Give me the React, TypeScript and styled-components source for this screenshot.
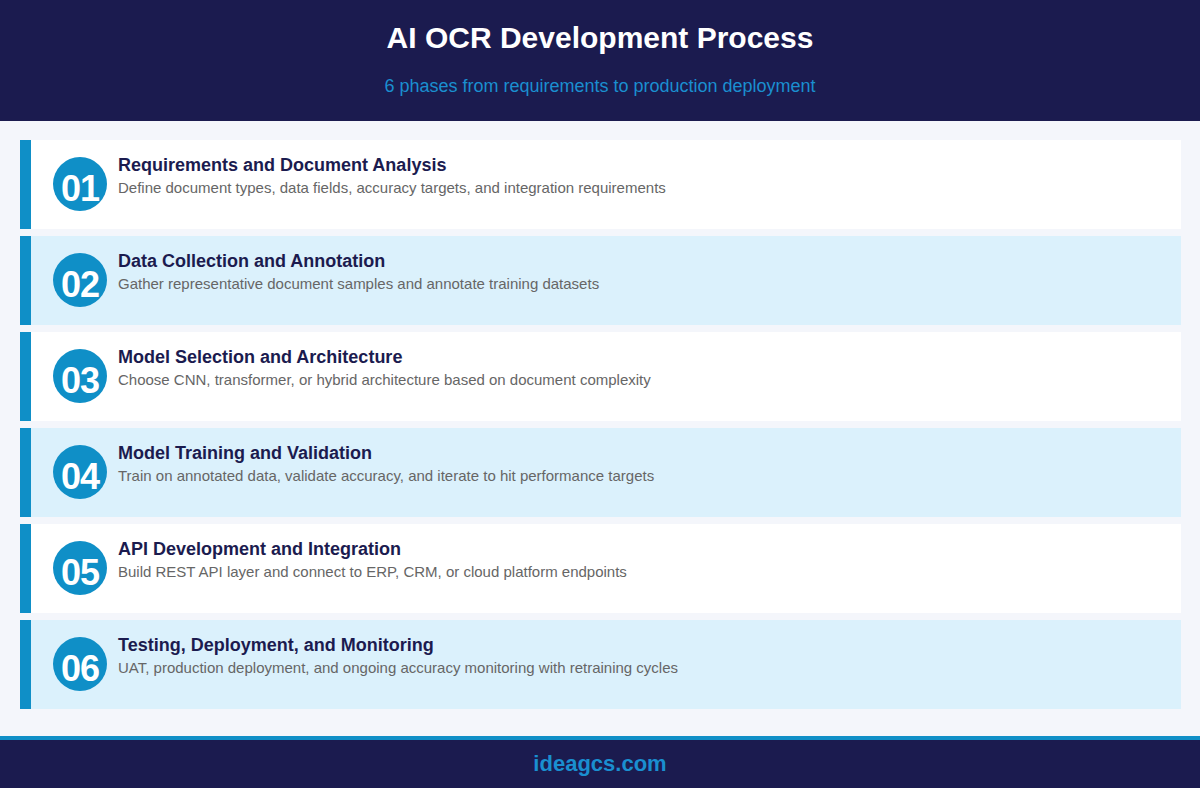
import styled, { createGlobalStyle } from 'styled-components';

const GlobalStyle = createGlobalStyle`
  body { margin: 0; font-family: "Liberation Sans", Arial, sans-serif; background: #f4f6fb; }
`;

const phases = [
  ['Requirements and Document Analysis', 'Define document types, data fields, accuracy targets, and integration requirements'],
  ['Data Collection and Annotation', 'Gather representative document samples and annotate training datasets'],
  ['Model Selection and Architecture', 'Choose CNN, transformer, or hybrid architecture based on document complexity'],
  ['Model Training and Validation', 'Train on annotated data, validate accuracy, and iterate to hit performance targets'],
  ['API Development and Integration', 'Build REST API layer and connect to ERP, CRM, or cloud platform endpoints'],
  ['Testing, Deployment, and Monitoring', 'UAT, production deployment, and ongoing accuracy monitoring with retraining cycles'],
];

const Page = styled.div`
  width: 1200px;
  height: 788px;
  display: flex;
  flex-direction: column;
`;

const Header = styled.header`
  height: 121px;
  background: #1b1b4f;
  display: flex;
  flex-direction: column;
  align-items: center;
  box-sizing: border-box;
  padding-top: 20px;
`;

const Title = styled.h1`
  margin: 0;
  color: #fff;
  font-size: 30px;
  font-weight: 700;
  line-height: 36px;
`;

const Subtitle = styled.p`
  margin: 19px 0 0;
  color: #1a8fd0;
  font-size: 18px;
  line-height: 22px;
`;

const List = styled.main`
  flex: 1;
  padding: 19px 19px 0 20px;
  display: flex;
  flex-direction: column;
  gap: 7px;
`;

const Row = styled.div<{ $alt: boolean }>`
  height: 89px;
  display: flex;
  align-items: flex-start;
  background: ${p => (p.$alt ? '#dbf1fc' : '#ffffff')};
  border-left: 11px solid #0f8fc7;
  box-sizing: border-box;
`;

const Badge = styled.div`
  width: 54px;
  height: 54px;
  margin: 17px 0 0 22px;
  border-radius: 50%;
  background: #0f8fc7;
  color: #fff;
  font-size: 36px;
  font-weight: 700;
  letter-spacing: -1px;
  display: flex;
  justify-content: center;
  align-items: center;
  padding-top: 10px;
  box-sizing: border-box;
  flex-shrink: 0;
`;

const Text = styled.div`
  margin: 13px 0 0 11px;
`;

const PhaseTitle = styled.div`
  color: #1b1b4f;
  font-size: 18px;
  font-weight: 700;
  line-height: 24px;
`;

const PhaseDesc = styled.div`
  color: #666;
  font-size: 15px;
  line-height: 22px;
`;

const Footer = styled.footer`
  height: 48px;
  border-top: 4px solid #0f8fc7;
  background: #1b1b4f;
  color: #1a8fd0;
  font-size: 22px;
  font-weight: 700;
  display: flex;
  justify-content: center;
  align-items: center;
`;

export default function App() {
  return (
    <Page>
      <GlobalStyle />
      <Header>
        <Title>AI OCR Development Process</Title>
        <Subtitle>6 phases from requirements to production deployment</Subtitle>
      </Header>
      <List>
        {phases.map(([t, d], i) => (
          <Row key={t} $alt={i % 2 === 1}>
            <Badge>{String(i + 1).padStart(2, '0')}</Badge>
            <Text>
              <PhaseTitle>{t}</PhaseTitle>
              <PhaseDesc>{d}</PhaseDesc>
            </Text>
          </Row>
        ))}
      </List>
      <Footer>ideagcs.com</Footer>
    </Page>
  );
}
